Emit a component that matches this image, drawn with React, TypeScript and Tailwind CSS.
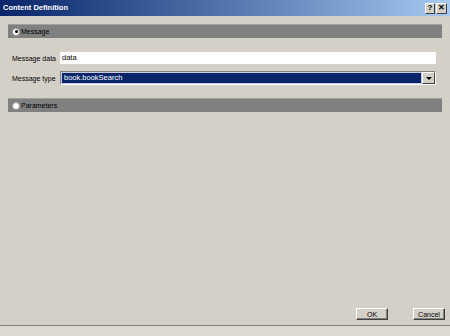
import { ReactNode } from "react";

function Radio({ checked }: { checked?: boolean }) {
  return (
    <span className="w-[8px] h-[8px] rounded-full bg-white border border-[#9a9a9a] flex items-center justify-center shrink-0">
      {checked && <span className="w-[3px] h-[3px] rounded-full bg-black" />}
    </span>
  );
}

function SectionBar({ checked, children }: { checked?: boolean; children: ReactNode }) {
  return (
    <div className="h-[14px] bg-[#808080] border-t border-[#a0a0a0] flex items-center gap-[1px] pl-[4px]">
      <Radio checked={checked} />
      <span className="text-[7px] leading-none text-black">{children}</span>
    </div>
  );
}

function Btn({ children }: { children: ReactNode }) {
  return (
    <button className="w-[32px] h-[12px] bg-[#d4d0c8] border border-t-white border-l-white border-r-[#404040] border-b-[#404040] shadow-[inset_-1px_-1px_0_#808080] text-[7px] leading-none text-black flex items-center justify-center">
      {children}
    </button>
  );
}

export default function App() {
  return (
    <div
      className="w-[450px] h-[336px] bg-[#d4d0c8] flex flex-col overflow-hidden"
      style={{ fontFamily: "'Liberation Sans', Arial, sans-serif" }}
    >
      <div className="h-[16px] bg-gradient-to-r from-[#0a246a] to-[#a6caf0] flex items-center justify-between pl-[3px] pr-[3px] shrink-0">
        <span className="text-white font-bold text-[7.5px] leading-none">Content Definition</span>
        <div className="flex">
          <span className="w-[10px] h-[11px] bg-[#d4d0c8] border border-t-white border-l-white border-r-[#404040] border-b-[#404040] text-[8px] font-bold leading-none flex items-center justify-center">?</span>
          <span className="w-[11px] h-[11px] ml-[1px] bg-[#d4d0c8] border border-t-white border-l-white border-r-[#404040] border-b-[#404040] text-[8px] font-bold leading-none flex items-center justify-center">✕</span>
        </div>
      </div>

      <div className="flex-1 flex flex-col px-[8px] pt-[8px]">
        <SectionBar checked>Message</SectionBar>

        <div className="flex flex-col gap-[7px] mt-[14px] pl-[4px] pr-[6px]">
          <div className="flex items-center">
            <span className="w-[48px] text-[7px] leading-none whitespace-nowrap">Message data</span>
            <div className="flex-1 h-[12px] bg-white flex items-center pl-[2px] text-[7.5px] leading-none">data</div>
          </div>
          <div className="flex items-center">
            <span className="w-[48px] text-[7px] leading-none whitespace-nowrap">Message type</span>
            <div className="flex-1 h-[14px] bg-white border border-t-[#808080] border-l-[#808080] border-r-white border-b-white flex items-stretch">
              <div className="flex-1 bg-[#0a246a] border border-[#c8cce0] text-white text-[7.5px] leading-none flex items-center pl-[2px]">book.bookSearch</div>
              <div className="w-[13px] bg-[#d4d0c8] border border-t-white border-l-white border-r-[#404040] border-b-[#404040] flex items-center justify-center">
                <span className="w-0 h-0 border-l-[3px] border-r-[3px] border-t-[3px] border-l-transparent border-r-transparent border-t-black" />
              </div>
            </div>
          </div>
        </div>

        <div className="mt-[13px]">
          <SectionBar>Parameters</SectionBar>
        </div>

        <div className="flex-1" />

        <div className="flex justify-end gap-[25px] mr-[-3px] mb-[5px]">
          <Btn>OK</Btn>
          <Btn>Cancel</Btn>
        </div>
      </div>
      <div className="h-[11px] border-t border-[#808080] bg-[#dcd9d2] shrink-0" />
    </div>
  );
}
